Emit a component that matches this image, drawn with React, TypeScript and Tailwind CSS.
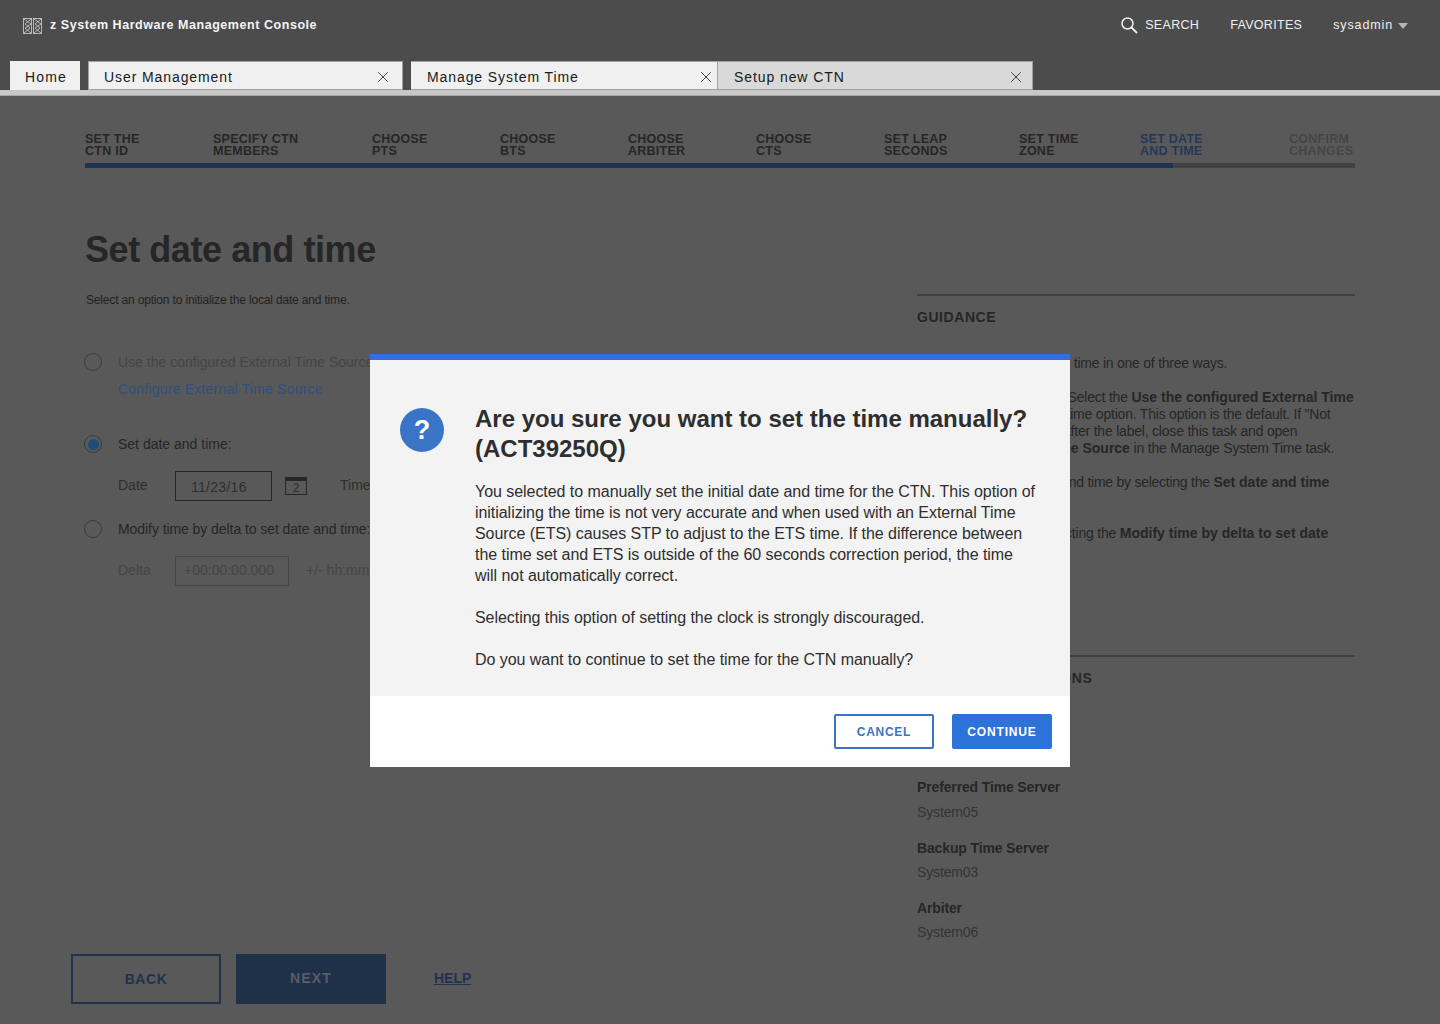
import React from 'react';
import { X } from 'lucide-react';

const steps = [
    { top: 'SET THE', bottom: 'CTN ID', width: 'w-[128px]' },
    { top: 'SPECIFY CTN', bottom: 'MEMBERS', width: 'w-[159px]' },
    { top: 'CHOOSE', bottom: 'PTS', width: 'w-[128px]' },
    { top: 'CHOOSE', bottom: 'BTS', width: 'w-[128px]' },
    { top: 'CHOOSE', bottom: 'ARBITER', width: 'w-[128px]' },
    { top: 'CHOOSE', bottom: 'CTS', width: 'w-[128px]' },
    { top: 'SET LEAP', bottom: 'SECONDS', width: 'w-[135px]' },
    { top: 'SET TIME', bottom: 'ZONE', width: 'w-[121px]' },
    { top: 'SET DATE', bottom: 'AND TIME', width: 'w-[149px]' },
    { top: 'CONFIRM', bottom: 'CHANGES', width: 'w-[66px]' },
];

const Logo = () => (
    <svg width="19" height="16" viewBox="0 0 19 16" fill="none" stroke="#d4d4d4" strokeWidth="0.8" className="mt-[2px]">
        <rect x="0.5" y="0.5" width="8" height="15" />
        <rect x="10.5" y="0.5" width="8" height="15" />
        <path d="M1 1 L8 6 L2 10 L8 15 M8 1 L2 6 L7 10 L1 15 M11 1 L18 6 L12 10 L18 15 M18 1 L12 6 L17 10 L11 15" />
    </svg>
);

const SearchIcon = () => (
    <svg width="17" height="17" viewBox="0 0 17 17" fill="none" stroke="#f0f0f0" strokeWidth="1.5" className="mr-[7px]">
        <circle cx="6.5" cy="6.5" r="5.5" />
        <path d="M10.5 10.5 L16 16" strokeWidth="1.8" />
    </svg>
);

const Tab = ({ label, className, active }: { label: string; className: string; active?: boolean }) => (
    <div
        className={`flex h-[29px] items-center justify-between border-x border-y border-[#a0a0a0] pt-[3px] text-[14px] tracking-[0.065em] text-[#1a1a1a] ${className} ${active ? 'bg-[#d9d9d9]' : 'bg-[#f0f0f0]'}`}
    >
        <span>{label}</span>
        <X size={18} strokeWidth={1.2} className="text-[#333333]" />
    </div>
);

const Radio = ({ checked }: { checked?: boolean }) => (
    <span className="flex h-[18px] w-[18px] shrink-0 items-center justify-center rounded-full border border-[#3a3a3a]">
        {checked && <span className="h-[11px] w-[11px] rounded-full bg-[#1e4e78]" />}
    </span>
);

const Summary = ({ label, value, gap }: { label: string; value: string; gap: string }) => (
    <div>
        <div className="text-[14px] font-bold leading-[18px] tracking-[-0.01em] text-[#262626]">{label}</div>
        <div className={`text-[14px] leading-[18px] tracking-[-0.01em] text-[#333333] ${gap}`}>{value}</div>
    </div>
);

export default function App() {
    return (
        <div className="relative flex h-[1024px] w-[1440px] flex-col overflow-hidden bg-[#595959] font-['Liberation_Sans',Arial,sans-serif]">
            <header className="shrink-0 bg-[#4c4c4c]">
                <div className="flex h-[61px] items-start justify-between pl-[23px] pr-[32px] pt-[16px]">
                    <div className="flex items-center gap-[8px]">
                        <Logo />
                        <span className="text-[12.5px] font-bold tracking-[0.044em] text-[#f4f4f4]">z System Hardware Management Console</span>
                    </div>
                    <nav className="flex items-center text-[12.5px] tracking-[0.025em] text-[#f0f0f0]">
                        <SearchIcon />
                        <span className="mr-[31px]">SEARCH</span>
                        <span className="mr-[31px]">FAVORITES</span>
                        <span className="tracking-[0.07em]">sysadmin</span>
                        <span className="ml-[5px] mt-[2px] h-0 w-0 border-x-[5px] border-t-[6px] border-x-transparent border-t-[#b5b5b5]" />
                    </nav>
                </div>
                <div className="flex h-[29px] items-end pl-[10px]">
                    <div className="mr-[8px] flex h-[29px] w-[70px] items-center justify-center bg-[#f0f0f0] pl-[2px] pt-[3px] text-[14px] tracking-[0.08em] text-[#1a1a1a]">Home</div>
                    <Tab label="User Management" className="mr-[8px] w-[315px] pl-[15px] pr-[10px]" />
                    <Tab label="Manage System Time" className="w-[307px] border-l-0 pl-[16px] pr-[2px]" />
                    <Tab label="Setup new CTN" className="w-[315px] border-l-0 pl-[16px] pr-[7px]" active />
                </div>
                <div className="h-[6px] border-b border-b-[#a8a8a8] bg-[#c8c8c8]" />
            </header>

            <main className="flex min-h-0 flex-1 flex-col px-[85px]">
                <div className="pt-[37px]">
                    <ol className="flex text-[12.5px] font-bold leading-[12px] tracking-[0.02em]">
                        {steps.map((step, i) => (
                            <li key={step.top + step.bottom} className={`${step.width} ${i === 8 ? 'text-[#24375a]' : i === 9 ? 'text-[#454545]' : 'text-[#262626]'}`}>
                                {step.top}
                                <br />
                                {step.bottom}
                            </li>
                        ))}
                    </ol>
                    <div className="mt-[6px] flex h-[5px] bg-[#414141]">
                        <div className="w-[1088px] bg-[#1f3253]" />
                    </div>
                </div>

                <div className="flex flex-1">
                    <section className="w-[832px] shrink-0">
                        <h1 className="mt-[61px] text-[36px] font-bold leading-[42px] tracking-[-0.012em] text-[#262626]">Set date and time</h1>
                        <p className="ml-[1px] mt-[21px] text-[12px] leading-[16px] tracking-[-0.014em] text-[#222222]">Select an option to initialize the local date and time.</p>

                        <div className="-ml-[1px] mt-[45px] flex items-center gap-[16px] text-[14px] leading-[18px] text-[#454545]">
                            <Radio />
                            <span>Use the configured External Time Source</span>
                        </div>
                        <a className="ml-[33px] mt-[9px] block text-[14px] leading-[18px] tracking-[0.015em] text-[#2d4f7f]">Configure External Time Source</a>

                        <div className="-ml-[1px] mt-[37px] flex items-center gap-[16px] text-[14px] leading-[18px] text-[#262626]">
                            <Radio checked />
                            <span>Set date and time:</span>
                        </div>
                        <div className="ml-[33px] mt-[18px] flex items-center text-[14px] text-[#2e2e2e]">
                            <span className="w-[57px] pb-[2px]">Date</span>
                            <div className="flex h-[30px] w-[97px] items-center border border-[#262626] pl-[15px] pt-[2px] tracking-[0.02em]">11/23/16</div>
                            <div className="ml-[13px] flex h-[18px] w-[22px] items-end justify-center border-x border-b border-t-[4px] border-[#262626] text-[12px] leading-[12px]">2</div>
                            <span className="ml-[33px] pb-[2px]">Time</span>
                        </div>

                        <div className="-ml-[1px] mt-[19px] flex items-center gap-[16px] text-[14px] leading-[18px] tracking-[-0.005em] text-[#262626]">
                            <Radio />
                            <span>Modify time by delta to set date and time:</span>
                        </div>
                        <div className="ml-[33px] mt-[18px] flex items-center text-[14px] text-[#454545]">
                            <span className="w-[57px] pb-[2px]">Delta</span>
                            <div className="flex h-[30px] w-[114px] items-center border border-[#454545] pb-[2px] pl-[8px]">+00:00:00.000</div>
                            <span className="ml-[17px] pb-[2px]">+/- hh:mm</span>
                        </div>
                    </section>

                    <aside className="w-[438px] shrink-0">
                        <div className="mt-[126px] h-[2px] bg-[#414141]" />
                        <h2 className="mt-[12px] text-[14px] font-bold leading-[18px] tracking-[0.04em] text-[#262626]">GUIDANCE</h2>
                        <div className="text-[14px] leading-[17px] tracking-[-0.015em] text-[#262626]">
                            <p className="mt-[29px] tracking-[-0.017em]">You can initialize the local time in one of three ways.</p>
                            <p className="mt-[17px] whitespace-nowrap">
                                Use an External Source: Select the <b className="tracking-normal">Use the configured External Time</b>
                                <br />
                                <b className="tracking-normal">Source</b> for the date and time option. This option is the default. If "Not
                                <br />
                                configured" is displayed after the label, close this task and open
                                <br />
                                <b className="tracking-normal">Configure External Time Source</b> in the Manage System Time task.
                            </p>
                            <p className="mt-[17px] whitespace-nowrap tracking-[-0.018em]">
                                Manually enter the date and time by selecting the <b className="tracking-normal">Set date and time</b>
                                <br />
                                option.
                            </p>
                            <p className="mt-[17px] whitespace-nowrap">
                                Adjust the clocks by selecting the <b className="tracking-normal">Modify time by delta to set date</b>
                                <br />
                                and time option.
                            </p>
                        </div>

                        <div className="mt-[96px] h-[2px] bg-[#414141]" />
                        <h2 className="mt-[12px] text-[14px] font-bold leading-[18px] tracking-[0.055em] text-[#262626]">CURRENT SELECTIONS</h2>
                        <div className="mt-[91px] flex flex-col gap-[18px]">
                            <Summary label="Preferred Time Server" value="System05" gap="mt-[7px]" />
                            <Summary label="Backup Time Server" value="System03" gap="mt-[6px]" />
                            <Summary label="Arbiter" value="System06" gap="mt-[6px]" />
                        </div>
                    </aside>
                </div>

                <div className="-ml-[14px] flex items-center pb-[20px]">
                    <button className="h-[50px] w-[150px] border-2 border-[#21324f] text-[14px] font-bold tracking-[0.04em] text-[#21324f]">BACK</button>
                    <button className="ml-[15px] h-[50px] w-[150px] bg-[#1f3049] pb-[2px] text-[14px] font-bold tracking-[0.08em] text-[#595e66]">NEXT</button>
                    <a className="ml-[48px] pb-[2px] text-[14px] font-bold text-[#21324f] underline">HELP</a>
                </div>
            </main>

            <div role="dialog" className="absolute left-[370px] top-[354px] w-[700px]">
                <div className="border-t-[6px] border-[#2d72d9] bg-[#f3f3f3]">
                    <div className="flex h-[336px] pl-[30px] pt-[48px]">
                        <div className="flex h-[44px] w-[44px] shrink-0 items-center justify-center rounded-full bg-[#3a74c6] text-[27px] font-bold text-[#ffffff]">?</div>
                        <div className="ml-[31px] -mt-[4px] w-[562px]">
                            <h2 className="text-[24px] font-bold leading-[30px] text-[#2e2e2e]">
                                Are you sure you want to set the time manually?
                                <br />
                                (ACT39250Q)
                            </h2>
                            <div className="mt-[17px] text-[16px] leading-[21px] tracking-[-0.003em] text-[#2e2e2e]">
                                <p>You selected to manually set the initial date and time for the CTN. This option of initializing the time is not very accurate and when used with an External Time Source (ETS) causes STP to adjust to the ETS time. If the difference between the time set and ETS is outside of the 60 seconds correction period, the time will not automatically correct.</p>
                                <p className="mt-[21px]">Selecting this option of setting the clock is strongly discouraged.</p>
                                <p className="mt-[21px]">Do you want to continue to set the time for the CTN manually?</p>
                            </div>
                        </div>
                    </div>
                </div>
                <div className="flex h-[71px] items-start justify-end gap-[18px] bg-[#ffffff] pr-[18px] pt-[18px]">
                    <button className="h-[35px] w-[100px] rounded-[2px] border-2 border-[#3c74c4] text-[12px] font-bold tracking-[0.06em] text-[#3c74c4]">CANCEL</button>
                    <button className="h-[35px] w-[100px] rounded-[2px] bg-[#2d72d9] text-[12px] font-bold tracking-[0.07em] text-[#ffffff]">CONTINUE</button>
                </div>
            </div>
        </div>
    );
}
